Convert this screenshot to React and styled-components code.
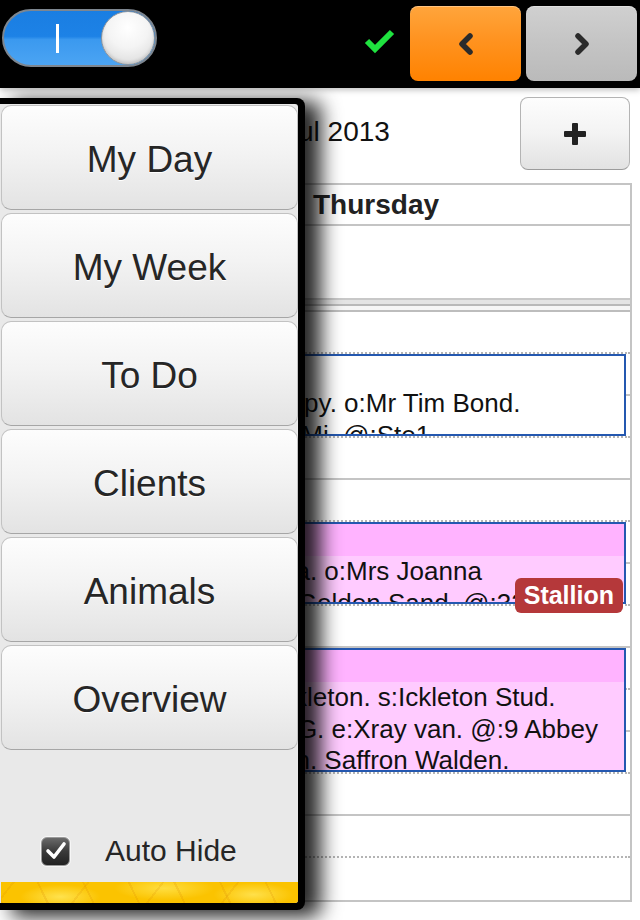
import React from 'react';
import styled, { createGlobalStyle } from 'styled-components';

const Global = createGlobalStyle`
  html, body { margin: 0; padding: 0; background: #fff; }
  body { font-family: "Liberation Sans", Arial, sans-serif; }
  * { box-sizing: border-box; }
`;

const Screen = styled.div`
  position: relative;
  width: 640px;
  height: 920px;
  overflow: hidden;
  background: #fff;
  display: flex;
  flex-direction: column;
`;

/* ---------- top bar ---------- */
const TopBar = styled.header`
  flex: none;
  height: 88px;
  background: #000;
  display: flex;
  align-items: flex-start;
  padding: 0 3px 0 2px;
  position: relative;
  z-index: 2;
  box-shadow: 0 2px 6px rgba(0, 0, 0, 0.25);
`;

const Toggle = styled.div`
  margin-top: 9px;
  width: 155px;
  height: 58px;
  border-radius: 29px;
  border: 2px solid #7d8690;
  background: linear-gradient(#1a7ee2 0%, #1d82e6 47%, #3b99ef 53%, #4ba4f3 100%);
  display: flex;
  align-items: center;
  justify-content: space-between;
  overflow: hidden;
`;

const ToggleMark = styled.span`
  margin-left: 52px;
  width: 3px;
  height: 29px;
  background: #fff;
`;

const Knob = styled.span`
  width: 54px;
  height: 54px;
  border-radius: 50%;
  border: 1px solid #8f959c;
  background: radial-gradient(circle at 50% 30%, #ffffff 0%, #f4f4f4 45%, #d4d4d4 100%);
  box-shadow: inset 0 -2px 3px rgba(0, 0, 0, 0.12);
`;

const Spacer = styled.div`
  flex: 1;
`;

const CheckIcon = styled.svg`
  margin-top: 28px;
  margin-right: 14px;
`;

const NavButton = styled.button`
  margin-top: 6px;
  margin-left: ${(p) => (p.$first ? '0' : '5px')};
  width: 111px;
  height: 75px;
  border-radius: 8px;
  border: none;
  padding: 0;
  display: flex;
  align-items: center;
  justify-content: center;
  background: ${(p) =>
    p.$active
      ? 'linear-gradient(#ffa53c 0%, #ff9320 45%, #ff8200 100%)'
      : 'linear-gradient(#d0d0d0 0%, #c4c4c4 50%, #bababa 100%)'};
  box-shadow: inset 0 1px 0 rgba(255, 255, 255, 0.35);
`;

/* ---------- calendar ---------- */
const Calendar = styled.main`
  flex: 1;
  display: flex;
  flex-direction: column;
`;

const TitleRow = styled.div`
  height: 95px;
  display: flex;
  align-items: flex-start;
  padding: 9px 10px 0 0;
`;

const MonthTitle = styled.div`
  flex: 1;
  padding-left: 284px;
  font-size: 28px;
  line-height: 70px;
  color: #111;
`;

const AddButton = styled.button`
  width: 110px;
  height: 73px;
  border-radius: 8px;
  border: 1px solid #b4b4b4;
  border-bottom-color: #9c9c9c;
  background: linear-gradient(#fdfdfd 0%, #f3f3f3 50%, #e2e2e2 100%);
  display: flex;
  align-items: center;
  justify-content: center;
  padding: 0;
`;

const Table = styled.section`
  margin: 0 8px;
  width: 624px;
  border: 2px solid #c4c4c4;
  display: flex;
  flex-direction: column;
`;

const Columns = styled.div`
  display: grid;
  grid-template-columns: 260px 1fr;
`;

const HeadRow = styled(Columns)`
  height: 41px;
  border-bottom: 2px solid #c4c4c4;
  align-items: center;
`;

const DayName = styled.div`
  grid-column: 2;
  padding-left: 43px;
  font-size: 28px;
  font-weight: bold;
  color: #222;
`;

const AllDayRow = styled.div`
  height: 72px;
`;

const Separator = styled.div`
  height: 14px;
  border-top: 2px solid #c8c8c8;
  border-bottom: 2px solid #bdbdbd;
  background: linear-gradient(#e4e4e4 0 4px, #b9b9b9 4px 6px, #f6f6f6 6px);
`;

const SlotGrid = styled(Columns)`
  grid-template-rows: repeat(14, 42px);
`;

const Slot = styled.div`
  grid-column: ${(p) => p.$col};
  grid-row: ${(p) => p.$row};
  border-bottom: ${(p) =>
    p.$last ? 'none' : p.$half ? '2px dotted #b4b4b4' : '2px solid #c4c4c4'};
`;

const Event = styled.div`
  grid-column: 2;
  grid-row: ${(p) => `${p.$row} / span ${p.$span}`};
  margin: 0 4px 2px 5px;
  border: 2px solid #2458b0;
  background: ${(p) => (p.$pink ? '#ffcbff' : '#fff')};
  position: relative;
  z-index: 1;
  display: flex;
  flex-direction: column;
`;

const EventClip = styled.div`
  flex: 1;
  overflow: hidden;
`;

const EventBand = styled.div`
  height: 32px;
  background: ${(p) => (p.$pink ? '#ffb3ff' : 'transparent')};
`;

const EventLine = styled.div`
  padding-left: 4px;
  font-size: 26px;
  line-height: 31.5px;
  color: #111;
  white-space: nowrap;
`;

const Badge = styled.span`
  position: absolute;
  right: 1px;
  top: 54px;
  height: 35px;
  padding: 0 9px;
  border-radius: 6px;
  background: #b5383a;
  color: #fff;
  font-size: 25px;
  font-weight: bold;
  line-height: 35px;
  z-index: 2;
`;

/* ---------- slide-out menu ---------- */
const Menu = styled.nav`
  position: absolute;
  top: 98px;
  left: 0;
  width: 305px;
  height: 812px;
  background: #000;
  border-radius: 0 8px 8px 0;
  padding: 6px 7px 7px 0;
  box-shadow: 14px 5px 20px 2px rgba(0, 0, 0, 0.85);
  z-index: 5;
  display: flex;
`;

const MenuPanel = styled.div`
  flex: 1;
  background: #e9e9e9;
  display: flex;
  flex-direction: column;
  gap: 3px;
  padding: 1px 0 0 1px;
  border-radius: 0 3px 3px 0;
  overflow: hidden;
`;

const MenuButton = styled.button`
  flex: none;
  height: 105px;
  width: 297px;
  border-radius: 10px;
  border: 1px solid #c2c2c2;
  border-bottom-color: #a6a6a6;
  background: linear-gradient(#fdfdfd 0%, #f3f3f3 45%, #e3e3e3 100%);
  font-family: "Liberation Sans", Arial, sans-serif;
  font-size: 37px;
  color: #262626;
  text-shadow: 0 1px 0 #fff;
  padding: 4px 0 0;
`;

const AutoHideRow = styled.label`
  margin-top: auto;
  height: 56px;
  display: flex;
  align-items: center;
  gap: 35px;
  padding-left: 40px;
  font-size: 30px;
  color: #262626;
`;

const CheckBox = styled.span`
  width: 29px;
  height: 29px;
  border-radius: 6px;
  border: 1px solid #9a9a9a;
  background: linear-gradient(#6a6a6a 0%, #3a3a3a 50%, #222 100%);
  display: flex;
  align-items: center;
  justify-content: center;
  box-shadow: 0 0 0 1px rgba(255, 255, 255, 0.6);
`;

const GoldStrip = styled.div`
  flex: none;
  height: 21px;
  background:
    repeating-linear-gradient(64deg, rgba(214, 130, 0, 0.18) 0 2px, transparent 2px 41px),
    repeating-linear-gradient(-52deg, rgba(214, 130, 0, 0.16) 0 2px, transparent 2px 59px),
    radial-gradient(ellipse 40px 12px at 20% 70%, #ffe24d 0%, transparent 100%),
    radial-gradient(ellipse 50px 12px at 55% 30%, #ffde40 0%, transparent 100%),
    radial-gradient(ellipse 40px 12px at 85% 60%, #ffe04a 0%, transparent 100%),
    #fbc300;
`;

const menuItems = ['My Day', 'My Week', 'To Do', 'Clients', 'Animals', 'Overview'];

const events = [
  {
    row: 2,
    span: 2,
    pink: false,
    lines: ['rapy. o:Mr Tim Bond.', 'l. Mi. @:Ste1'],
  },
  {
    row: 6,
    span: 2,
    pink: true,
    lines: ['na. o:Mrs Joanna', 'r Golden Sand. @:32'],
    badge: 'Stallion',
  },
  {
    row: 9,
    span: 3,
    pink: true,
    lines: ['ckleton. s:Ickleton Stud.', 'r G. e:Xray van. @:9 Abbey', 'en. Saffron Walden.'],
  },
];

export default function App() {
  const rows = Array.from({ length: 14 }, (_, i) => i + 1);
  return (
    <>
      <Global />
      <Screen>
        <TopBar>
          <Toggle>
            <ToggleMark />
            <Knob />
          </Toggle>
          <Spacer />
          <CheckIcon width="32" height="26" viewBox="0 0 32 26">
            <polyline
              points="3,13 11,21 28,4"
              fill="none"
              stroke="#1fe23f"
              strokeWidth="6"
              strokeLinejoin="miter"
            />
          </CheckIcon>
          <NavButton $first $active aria-label="Previous">
            <svg width="20" height="24" viewBox="0 0 20 24">
              <polyline
                points="14,4 6,12 14,20"
                fill="none"
                stroke="#2b2b2b"
                strokeWidth="5.5"
                strokeLinejoin="round"
                strokeLinecap="round"
              />
            </svg>
          </NavButton>
          <NavButton aria-label="Next">
            <svg width="20" height="24" viewBox="0 0 20 24">
              <polyline
                points="6,4 14,12 6,20"
                fill="none"
                stroke="#2b2b2b"
                strokeWidth="5.5"
                strokeLinejoin="round"
                strokeLinecap="round"
              />
            </svg>
          </NavButton>
        </TopBar>

        <Calendar>
          <TitleRow>
            <MonthTitle>Jul 2013</MonthTitle>
            <AddButton aria-label="Add">
              <svg width="24" height="22" viewBox="0 0 24 22">
                <rect x="9" y="0" width="6" height="22" rx="1" fill="#222" />
                <rect x="1" y="8" width="22" height="6" rx="1" fill="#222" />
              </svg>
            </AddButton>
          </TitleRow>

          <Table>
            <HeadRow>
              <DayName>Thursday</DayName>
            </HeadRow>
            <AllDayRow />
            <Separator />
            <SlotGrid>
              {rows.map((r) => (
                <React.Fragment key={r}>
                  <Slot $col={1} $row={r} $half={r % 2 === 1} $last={r === 14} />
                  <Slot $col={2} $row={r} $half={r % 2 === 1} $last={r === 14} />
                </React.Fragment>
              ))}
              {events.map((ev, i) => (
                <Event key={i} $row={ev.row} $span={ev.span} $pink={ev.pink}>
                  <EventClip>
                    <EventBand $pink={ev.pink} />
                    {ev.lines.map((l, j) => (
                      <EventLine key={j}>{l}</EventLine>
                    ))}
                  </EventClip>
                  {ev.badge && <Badge>{ev.badge}</Badge>}
                </Event>
              ))}
            </SlotGrid>
          </Table>
        </Calendar>

        <Menu>
          <MenuPanel>
            {menuItems.map((m) => (
              <MenuButton key={m}>{m}</MenuButton>
            ))}
            <AutoHideRow>
              <CheckBox>
                <svg width="22" height="20" viewBox="0 0 22 20">
                  <polyline
                    points="3,10 9,16 19,3"
                    fill="none"
                    stroke="#fff"
                    strokeWidth="3.6"
                    strokeLinecap="round"
                    strokeLinejoin="round"
                  />
                </svg>
              </CheckBox>
              Auto Hide
            </AutoHideRow>
            <GoldStrip />
          </MenuPanel>
        </Menu>
      </Screen>
    </>
  );
}
